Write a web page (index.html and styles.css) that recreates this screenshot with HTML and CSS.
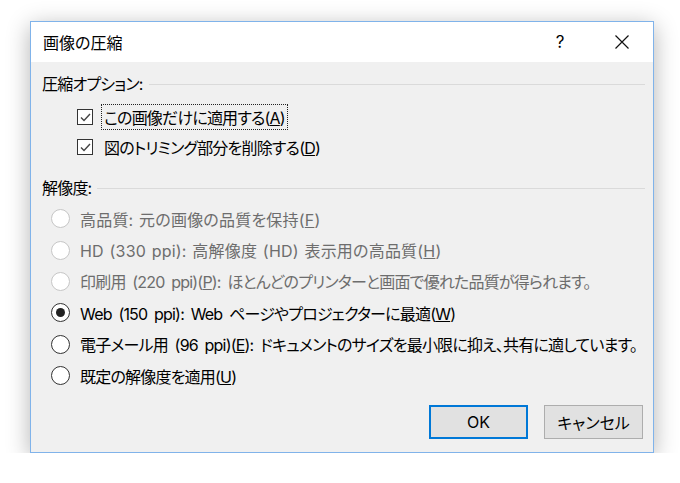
FILE: index.html
```html
<!DOCTYPE html>
<html lang="ja">
<head>
    <meta charset="UTF-8">
    <meta name="viewport" content="width=device-width, initial-scale=1.0">
    <title>画像の圧縮</title>
    <link rel="stylesheet" href="styles.css">
</head>
<body>
    <!-- Compress pictures dialog -->
    <div class="dialog">
        <div class="titlebar">
            <span class="title">画像の圧縮</span>
            <span class="help">?</span>
            <span class="close">
                <svg width="14" height="14" viewBox="0 0 14 14">
                    <path d="M0.5 0.5 L13.5 13.5 M13.5 0.5 L0.5 13.5" stroke="#111" stroke-width="1.2" fill="none"/>
                </svg>
            </span>
        </div>

        <div class="content">
            <div class="group-head"><span>圧縮オプション:</span></div>
            <div class="checks">
                <div class="check-row">
                    <span class="checkbox">
                        <svg width="13" height="13" viewBox="0 0 13 13">
                            <path d="M2 6.5 L5 9.5 L11 3" stroke="#444" stroke-width="1.4" fill="none"/>
                        </svg>
                    </span>
                    <span class="check-label focused">この画像だけに適用する(<u>A</u>)</span>
                </div>
                <div class="check-row">
                    <span class="checkbox">
                        <svg width="13" height="13" viewBox="0 0 13 13">
                            <path d="M2 6.5 L5 9.5 L11 3" stroke="#444" stroke-width="1.4" fill="none"/>
                        </svg>
                    </span>
                    <span class="check-label">図のトリミング部分を削除する(<u>D</u>)</span>
                </div>
            </div>

            <div class="group-head res-head"><span>解像度:</span></div>
            <div class="radios">
                <div class="radio-row disabled spaced">
                    <span class="radio"></span>
                    <span>高品質: 元の画像の品質を保持(<u>F</u>)</span>
                </div>
                <div class="radio-row disabled spaced">
                    <span class="radio"></span>
                    <span>HD (330 ppi): 高解像度 (HD) 表示用の高品質(<u>H</u>)</span>
                </div>
                <div class="radio-row disabled">
                    <span class="radio"></span>
                    <span>印刷用 (220 ppi)(<u>P</u>): ほとんどのプリンターと画面で優れた品質が得られます。</span>
                </div>
                <div class="radio-row">
                    <span class="radio selected"></span>
                    <span>Web (150 ppi): Web ページやプロジェクターに最適(<u>W</u>)</span>
                </div>
                <div class="radio-row">
                    <span class="radio"></span>
                    <span>電子メール用 (96 ppi)(<u>E</u>): ドキュメントのサイズを最小限に抑え、共有に適しています。</span>
                </div>
                <div class="radio-row">
                    <span class="radio"></span>
                    <span>既定の解像度を適用(<u>U</u>)</span>
                </div>
            </div>

            <div class="buttons">
                <button class="btn default">OK</button>
                <button class="btn">キャンセル</button>
            </div>
        </div>
    </div>
</body>
</html>
```

FILE: styles.css
```css
/* Page */
body {
    margin: 0;
    background: #fff;
    font-family: "Inter", "Noto Sans CJK JP", sans-serif;
    font-size: 16px;
    font-feature-settings: "palt";
    letter-spacing: -0.8px;
    word-spacing: 3px;
    color: #000;
}

/* Dialog window */
.dialog {
    margin: 21px 0 0 30px;
    width: 622px;
    height: 430px;
    border: 1px solid #80b3ea;
    background: #f0f0f0;
    box-shadow: 0 5px 22px rgba(0, 0, 0, 0.3);
    display: flex;
    flex-direction: column;
}

.titlebar {
    height: 40px;
    background: #fff;
    display: flex;
    align-items: center;
    padding-left: 12px;
    padding-right: 8px;
    letter-spacing: 0;
}

.title {
    flex: 1;
}

.help {
    width: 30px;
    margin-right: 24px;
    text-align: center;
    font-size: 17px;
}

.close {
    width: 46px;
    display: flex;
    justify-content: center;
    align-items: center;
}

.content {
    flex: 1;
    padding: 6px 8px 0 11px;
    display: flex;
    flex-direction: column;
}

/* Group headings with etched line */
.group-head {
    height: 30px;
    display: flex;
    align-items: center;
    gap: 6px;
}

.group-head::after {
    content: "";
    flex: 1;
    height: 1px;
    background: #dadada;
    margin-top: 2px;
}

.res-head {
    margin-top: 10px;
}

/* Checkboxes */
.checks {
    margin-top: 4px;
    padding-left: 35px;
}

.check-row {
    height: 30px;
    display: flex;
    align-items: center;
}

.checkbox {
    width: 14px;
    height: 14px;
    border: 1px solid #333;
    background: #fff;
    display: flex;
    align-items: center;
    justify-content: center;
}

.check-label {
    margin-left: 8px;
    padding: 0 2px;
    border: 1px dotted transparent;
}

.check-label.focused {
    border-color: #222;
}

/* Radio buttons */
.radios {
    margin-top: 1px;
    padding-left: 9px;
}

.radio-row {
    height: 31.4px;
    display: flex;
    align-items: center;
    gap: 10px;
    white-space: nowrap;
}

.radio-row.spaced {
    letter-spacing: 0.2px;
    word-spacing: 1px;
}

.radio {
    width: 17px;
    height: 17px;
    border: 1px solid #333;
    border-radius: 50%;
    background: #fff;
    display: flex;
    align-items: center;
    justify-content: center;
    flex-shrink: 0;
}

.radio.selected::after {
    content: "";
    width: 9px;
    height: 9px;
    border-radius: 50%;
    background: #222;
}

.radio-row.disabled {
    color: #6d6d6d;
}

.radio-row.disabled .radio {
    border-color: #c6c6c6;
}

/* Dialog buttons */
.buttons {
    margin-top: 14px;
    margin-right: 2px;
    display: flex;
    justify-content: flex-end;
    gap: 16px;
}

.btn {
    width: 99px;
    height: 34px;
    background: #e1e1e1;
    border: 1px solid #adadad;
    font-family: inherit;
    font-size: 16px;
    font-feature-settings: "palt";
    letter-spacing: 0;
    color: #000;
    padding: 0;
}

.btn.default {
    border: 2px solid #0078d7;
}
```
